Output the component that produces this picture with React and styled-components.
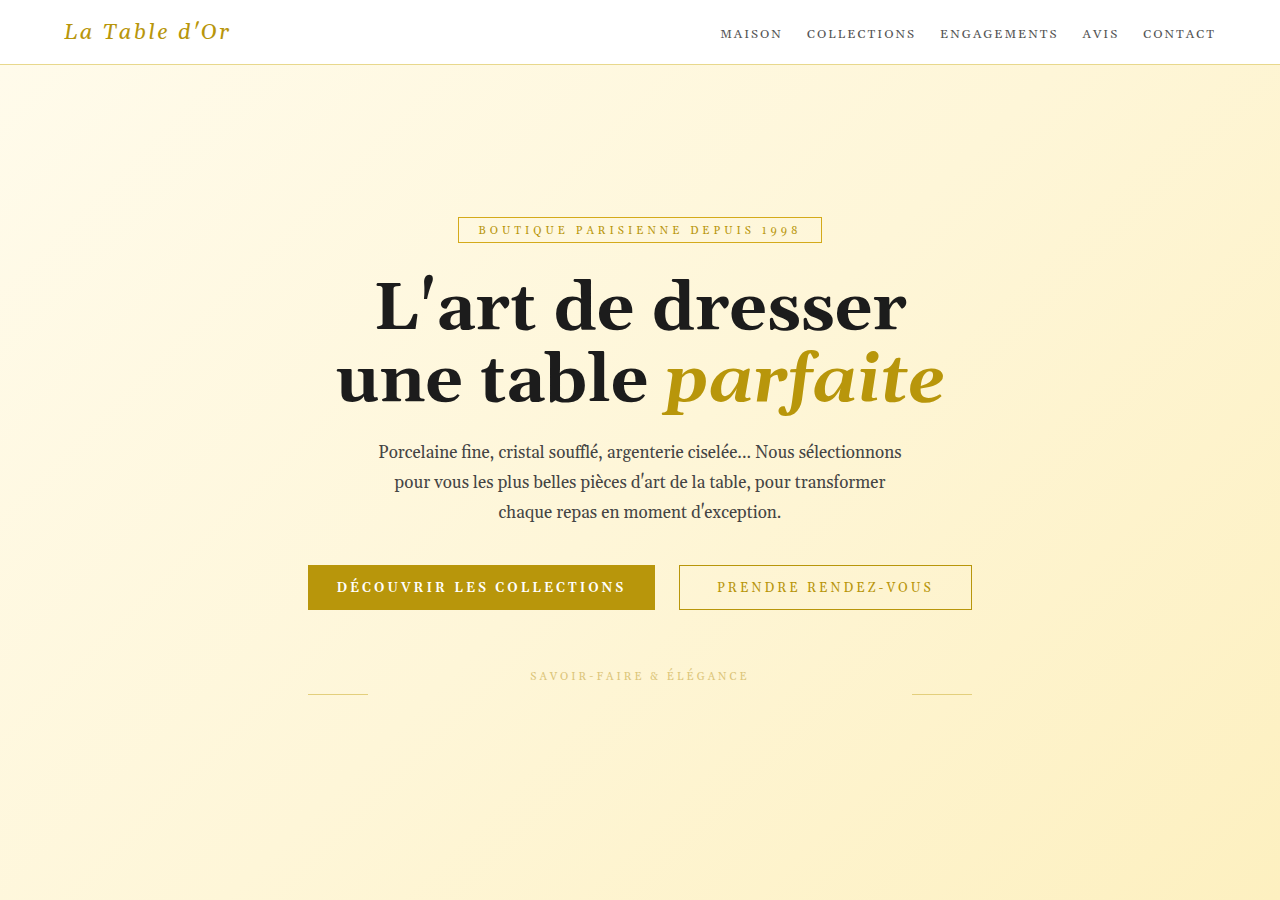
import React from "react";
import styled, { createGlobalStyle } from "styled-components";

const GlobalStyle = createGlobalStyle`
  * { box-sizing: border-box; }
  body {
    margin: 0;
    font-family: Georgia, Gelasio, "Liberation Serif", serif;
    background: #fffbeb;
  }
`;

const Page = styled.div`
  min-height: 900px;
  display: flex;
  flex-direction: column;
`;

const Header = styled.header`
  height: 65px;
  background: #ffffff;
  border-bottom: 1px solid #e8d88c;
  display: flex;
  align-items: center;
  justify-content: space-between;
  padding: 0 64px;
`;

const Logo = styled.a`
  font-size: 22px;
  font-style: italic;
  letter-spacing: 2.5px;
  color: #b8960b;
  text-decoration: none;
  margin-top: 1px;
`;

const Nav = styled.nav`
  display: flex;
  gap: 24px;
  margin-top: 3px;
`;

const NavLink = styled.a`
  font-size: 12.5px;
  letter-spacing: 2px;
  text-transform: uppercase;
  color: #555555;
  text-decoration: none;
`;

const Hero = styled.section`
  flex: 1;
  background: linear-gradient(135deg, #fffbeb 0%, #fef6d8 50%, #fdf0c0 100%);
  display: flex;
  flex-direction: column;
  align-items: center;
  padding-top: 152px;
`;

const Inner = styled.div`
  width: 664px;
  display: flex;
  flex-direction: column;
  align-items: center;
  text-align: center;
`;

const Badge = styled.span`
  display: inline-block;
  border: 1px solid #d4aa1a;
  padding: 7px 20px 5px;
  font-size: 11px;
  line-height: 12px;
  letter-spacing: 4px;
  color: #b8960b;
`;

const Title = styled.h1`
  margin: 31px 0 0;
  font-size: 66px;
  line-height: 72px;
  font-weight: 700;
  color: #1c1c1c;
  white-space: nowrap;

  em {
    color: #b8960b;
    font-style: italic;
  }
`;

const Lead = styled.p`
  margin: 20px 0 0;
  width: 540px;
  font-size: 17px;
  line-height: 30px;
  color: #444444;
`;

const Actions = styled.div`
  margin-top: 37px;
  width: 100%;
  display: flex;
  gap: 24px;
`;

const Button = styled.a`
  height: 45px;
  display: flex;
  align-items: center;
  justify-content: center;
  font-size: 13px;
  letter-spacing: 3px;
  text-transform: uppercase;
  text-decoration: none;
  border: 1px solid #b8960b;
  flex: ${(p) => p.$grow};
  background: ${(p) => (p.$primary ? "#b8960b" : "transparent")};
  color: ${(p) => (p.$primary ? "#ffffff" : "#b8960b")};
  font-weight: ${(p) => (p.$primary ? 600 : 400)};
`;

const Ornament = styled.div`
  margin-top: 60px;
  width: 100%;
  display: grid;
  grid-template-columns: 60px 1fr 60px;
  align-items: end;
`;

const Rule = styled.span`
  height: 1px;
  background: #e3cf7c;
`;

const OrnamentText = styled.span`
  font-size: 11px;
  letter-spacing: 3px;
  color: #dcc57a;
  padding-bottom: 11px;
`;

export default function App() {
  return (
    <Page>
      <GlobalStyle />
      <Header>
        <Logo href="#">La Table d'Or</Logo>
        <Nav>
          <NavLink href="#">Maison</NavLink>
          <NavLink href="#">Collections</NavLink>
          <NavLink href="#">Engagements</NavLink>
          <NavLink href="#">Avis</NavLink>
          <NavLink href="#">Contact</NavLink>
        </Nav>
      </Header>
      <Hero>
        <Inner>
          <Badge>BOUTIQUE PARISIENNE DEPUIS 1998</Badge>
          <Title>
            L'art de dresser
            <br />
            une table <em>parfaite</em>
          </Title>
          <Lead>
            Porcelaine fine, cristal soufflé, argenterie ciselée... Nous
            sélectionnons pour vous les plus belles pièces d'art de la table,
            pour transformer chaque repas en moment d'exception.
          </Lead>
          <Actions>
            <Button href="#" $primary $grow="347">
              Découvrir les collections
            </Button>
            <Button href="#" $grow="293">
              Prendre rendez-vous
            </Button>
          </Actions>
          <Ornament>
            <Rule />
            <OrnamentText>SAVOIR-FAIRE &amp; ÉLÉGANCE</OrnamentText>
            <Rule />
          </Ornament>
        </Inner>
      </Hero>
    </Page>
  );
}
